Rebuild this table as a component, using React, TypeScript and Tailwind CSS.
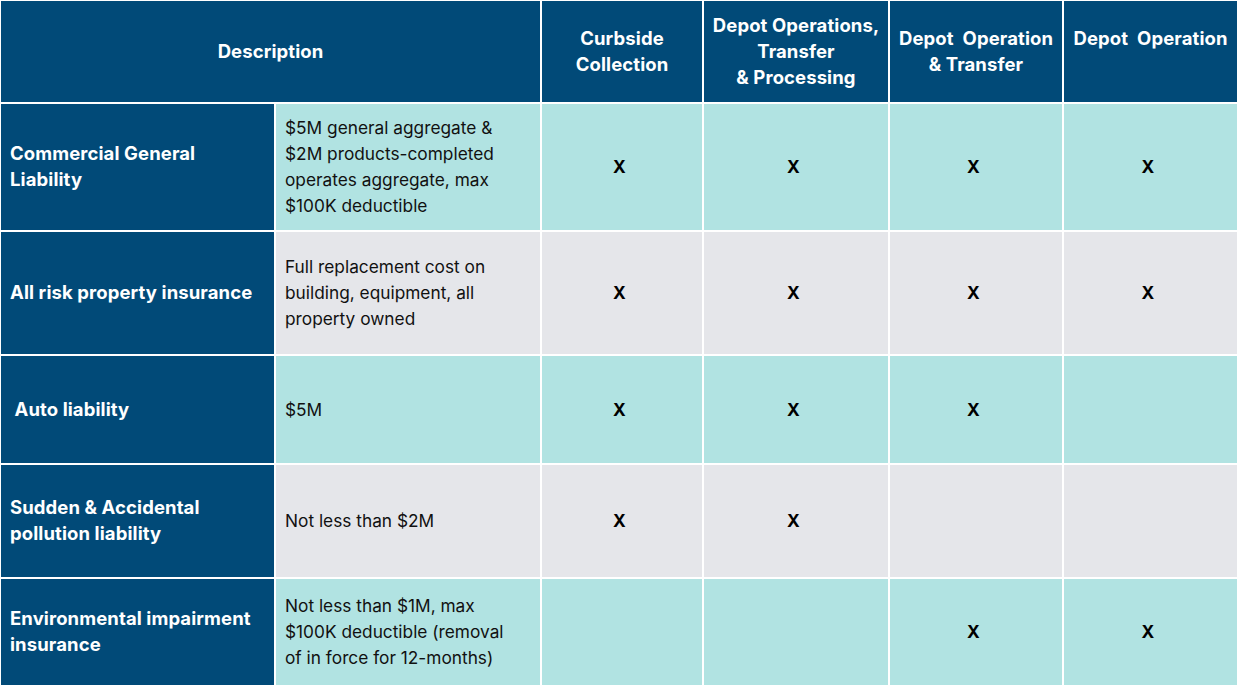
import React from 'react';

type Row = {
  title: string;
  detail: string;
  marks: boolean[];
  tone: 'teal' | 'gray';
};

const headers = [
  'Curbside\nCollection',
  'Depot Operations,\nTransfer\n& Processing',
  'Depot  Operation\n& Transfer',
  'Depot  Operation\n\u00a0',
];

const rows: Row[] = [
  {
    title: 'Commercial General\nLiability',
    detail: '$5M general aggregate &\n$2M products-completed\noperates aggregate, max\n$100K deductible',
    marks: [true, true, true, true],
    tone: 'teal',
  },
  {
    title: 'All risk property insurance',
    detail: 'Full replacement cost on\nbuilding, equipment, all\nproperty owned',
    marks: [true, true, true, true],
    tone: 'gray',
  },
  {
    title: ' Auto liability',
    detail: '$5M',
    marks: [true, true, true, false],
    tone: 'teal',
  },
  {
    title: 'Sudden & Accidental\npollution liability',
    detail: 'Not less than $2M',
    marks: [true, true, false, false],
    tone: 'gray',
  },
  {
    title: 'Environmental impairment\ninsurance',
    detail: 'Not less than $1M, max\n$100K deductible (removal\nof in force for 12-months)',
    marks: [false, false, true, true],
    tone: 'teal',
  },
];

export default function App() {
  return (
    <div
      className="w-[1239px] h-[686px] bg-white pt-[1px] pl-[1px] overflow-hidden"
      style={{ fontFamily: 'Inter, "Liberation Sans", sans-serif' }}
    >
      <div className="grid grid-cols-[273px_264px_160px_184px_172px_173px] grid-rows-[101px_126px_122px_107px_112px_106px] gap-[2px] text-[17.3px] leading-[26px]">
        {/* Header */}
        <div className="col-span-2 bg-[#014a78] text-white font-bold text-[18.5px] tracking-[0.1px] pb-[2px] flex items-center justify-center">
          Description
        </div>
        {headers.map((h) => (
          <div
            key={h}
            className="bg-[#014a78] text-white font-bold text-[18.5px] tracking-[0.1px] pb-[2px] flex items-center justify-center text-center whitespace-pre"
          >
            {h}
          </div>
        ))}

        {/* Body */}
        {rows.map((r) => {
          const bg = r.tone === 'teal' ? 'bg-[#b1e3e2]' : 'bg-[#e5e6ea]';
          return (
            <React.Fragment key={r.title}>
              <div className="bg-[#014a78] text-white font-bold text-[18.5px] tracking-[0.1px] pb-[2px] flex items-center pl-[9px] whitespace-pre">
                {r.title}
              </div>
              <div className={`${bg} text-[#111] flex items-center pl-[9px] whitespace-pre`}>
                {r.detail}
              </div>
              {r.marks.map((m, i) => (
                <div key={i} className={`${bg} text-black font-bold pr-[5px] flex items-center justify-center`}>
                  {m ? 'X' : ''}
                </div>
              ))}
            </React.Fragment>
          );
        })}
      </div>
    </div>
  );
}
